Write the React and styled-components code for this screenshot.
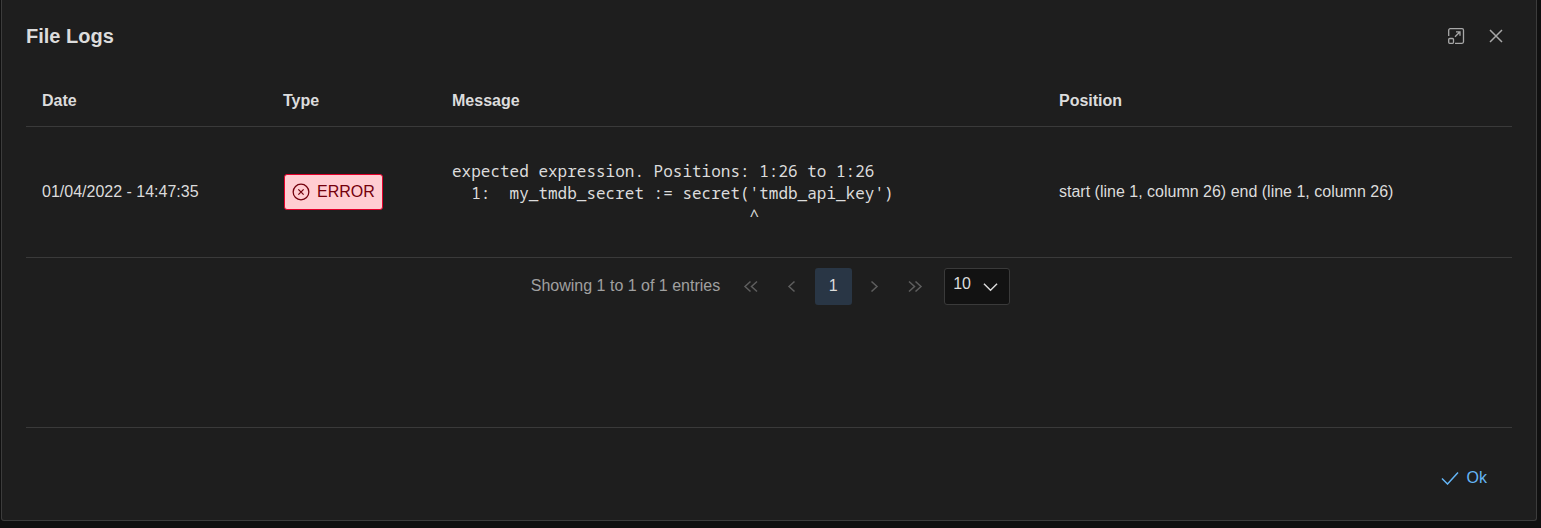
import React from "react";
import styled, { createGlobalStyle } from "styled-components";

const GlobalStyle = createGlobalStyle`
  html, body {
    margin: 0;
    height: 100%;
    background: #101010;
    overflow: hidden;
    font-family: "Liberation Sans", Arial, sans-serif;
  }
`;

const Dialog = styled.div`
  box-sizing: border-box;
  width: 1536px;
  height: 521px;
  margin-left: 1px;
  padding: 0 24px;
  background: #1e1e1e;
  border: 1px solid #3c3c3c;
  border-top: none;
  border-radius: 0 0 3px 3px;
  display: flex;
  flex-direction: column;
`;

const Header = styled.div`
  height: 72px;
  display: flex;
  align-items: center;
  justify-content: space-between;
`;

const Title = styled.h2`
  margin: 0;
  font-size: 20px;
  font-weight: 700;
  color: #dcdcdc;
`;

const HeaderIcons = styled.div`
  display: flex;
  align-items: center;
  gap: 20px;
  margin-right: 6px;
`;

const IconButton = styled.button`
  width: 20px;
  height: 20px;
  padding: 0;
  border: none;
  background: none;
  color: #a8a8a8;
  display: flex;
  align-items: center;
  justify-content: center;
`;

const Table = styled.table`
  width: 1486px;
  table-layout: fixed;
  border-collapse: collapse;
  color: #dcdcdc;
  font-size: 16px;
`;

const Th = styled.th`
  height: 54px;
  padding: 4px 16px 0;
  box-sizing: border-box;
  text-align: left;
  font-weight: 700;
  border-bottom: 1px solid #3a3a3a;
`;

const Td = styled.td`
  height: 130px;
  padding: 0 16px;
  border-bottom: 1px solid #3a3a3a;
`;

const ErrorTag = styled.span`
  box-sizing: border-box;
  display: inline-flex;
  align-items: center;
  gap: 7px;
  height: 36px;
  width: 99px;
  margin-left: 1px;
  padding: 0 7px 0;
  background: #ffcdd2;
  border: 1px solid #e4002b;
  border-radius: 3px;
  color: #73000c;
`;

const Mono = styled.pre`
  margin: 3px 0 0;
  font-family: "Noto Sans Mono", "DejaVu Sans Mono", monospace;
  font-size: 16px;
  line-height: 22px;
  color: #dcdcdc;
`;

const Pager = styled.div`
  height: 57px;
  display: flex;
  align-items: center;
  justify-content: center;
  padding-left: 3px;
  color: #a0a0a0;
  font-size: 16px;
`;

const PageInfo = styled.span`
  margin: 0 11px 1px 0;
`;

const PageArrow = styled.button`
  width: 37px;
  height: 37px;
  margin: 0 2px;
  padding: 0;
  border: none;
  background: none;
  color: #5e5e5e;
  display: flex;
  align-items: center;
  justify-content: center;
`;

const PageCurrent = styled(PageArrow)`
  background: #293645;
  border-radius: 3px;
  color: #dcdcdc;
  padding-right: 1px;
  font: 16px "Liberation Sans", Arial, sans-serif;
`;

const PageSize = styled.div`
  box-sizing: border-box;
  width: 66px;
  height: 37px;
  margin-left: 8px;
  padding: 0 11px 4px 8px;
  background: #121212;
  border: 1px solid #3a3a3a;
  border-radius: 3px;
  color: #dcdcdc;
  display: flex;
  align-items: center;
  justify-content: space-between;
`;

const Spacer = styled.div`
  flex: 1;
  border-bottom: 1px solid #3a3a3a;
`;

const Footer = styled.div`
  height: 92px;
  padding-top: 7px;
  box-sizing: border-box;
  display: flex;
  align-items: center;
  justify-content: flex-end;
`;

const OkButton = styled.button`
  display: flex;
  align-items: center;
  gap: 8px;
  padding: 0;
  margin-right: 25px;
  border: none;
  background: none;
  color: #64b5f6;
  font: 16px "Liberation Sans", Arial, sans-serif;
`;

const Chevron = ({ double, left }) => (
  <svg width="18" height="18" viewBox="0 0 18 18" fill="none" stroke="currentColor" strokeWidth="1.5">
    <g transform={left ? "translate(-1 1)" : "matrix(-1 0 0 1 17 1)"}>
      {double ? (
        <>
          <path d="M8.500 3.500 3 8.500l5.500 5" />
          <path d="M15 3.500 9.500 8.500l5.500 5" />
        </>
      ) : (
        <path d="M11.500 3.500 6 8.500l5.500 5" />
      )}
    </g>
  </svg>
);

export default function App() {
  return (
    <>
      <GlobalStyle />
      <Dialog>
        <Header>
          <Title>File Logs</Title>
          <HeaderIcons>
            <IconButton>
              <svg width="18" height="18" viewBox="0 0 18 18" fill="none" stroke="currentColor" strokeWidth="1.3">
                <path d="M7 1.700h8a1.500 1.500 0 0 1 1.500 1.500v11.600a1.500 1.500 0 0 1-1.500 1.500H8" />
                <path d="M1.700 9V3.200A1.500 1.500 0 0 1 3.200 1.700H7" />
                <rect x="1.700" y="11.500" width="4.800" height="4.800" rx="1" />
                <path d="M8 9.800 13 4.800M9 4.800h4v4" />
              </svg>
            </IconButton>
            <IconButton>
              <svg width="16" height="16" viewBox="0 0 16 16" fill="none" stroke="currentColor" strokeWidth="1.5">
                <path d="M2 2l12 12M14 2 2 14" />
              </svg>
            </IconButton>
          </HeaderIcons>
        </Header>
        <Table>
          <colgroup>
            <col width="241" />
            <col width="169" />
            <col width="607" />
            <col />
          </colgroup>
          <thead>
            <tr>
              <Th>Date</Th>
              <Th>Type</Th>
              <Th>Message</Th>
              <Th>Position</Th>
            </tr>
          </thead>
          <tbody>
            <tr>
              <Td>01/04/2022 - 14:47:35</Td>
              <Td>
                <ErrorTag>
                  <svg width="18" height="18" viewBox="0 0 17 17" fill="none" stroke="currentColor" strokeWidth="1.2">
                    <circle cx="8.500" cy="8.500" r="7.400" />
                    <path d="M6 6l5 5M11 6l-5 5" />
                  </svg>
                  ERROR
                </ErrorTag>
              </Td>
              <Td>
                <Mono>{`expected expression. Positions: 1:26 to 1:26
  1:  my_tmdb_secret := secret('tmdb_api_key')
                               ^`}</Mono>
              </Td>
              <Td>start (line 1, column 26) end (line 1, column 26)</Td>
            </tr>
          </tbody>
        </Table>
        <Pager>
          <PageInfo>Showing 1 to 1 of 1 entries</PageInfo>
          <PageArrow><Chevron double left /></PageArrow>
          <PageArrow><Chevron left /></PageArrow>
          <PageCurrent>1</PageCurrent>
          <PageArrow><Chevron /></PageArrow>
          <PageArrow><Chevron double /></PageArrow>
          <PageSize>
            10
            <svg width="15" height="16" viewBox="0 0 16 16" fill="none" stroke="currentColor" strokeWidth="1.500" style={{ marginTop: 6 }}>
              <path d="M1 4.500 8 11.500 15 4.500" />
            </svg>
          </PageSize>
        </Pager>
        <Spacer />
        <Footer>
          <OkButton>
            <svg width="18" height="14" viewBox="0 0 18 14" fill="none" stroke="currentColor" strokeWidth="1.500">
              <path d="M1 7.500 6.500 13 17 1.500" />
            </svg>
            Ok
          </OkButton>
        </Footer>
      </Dialog>
    </>
  );
}
